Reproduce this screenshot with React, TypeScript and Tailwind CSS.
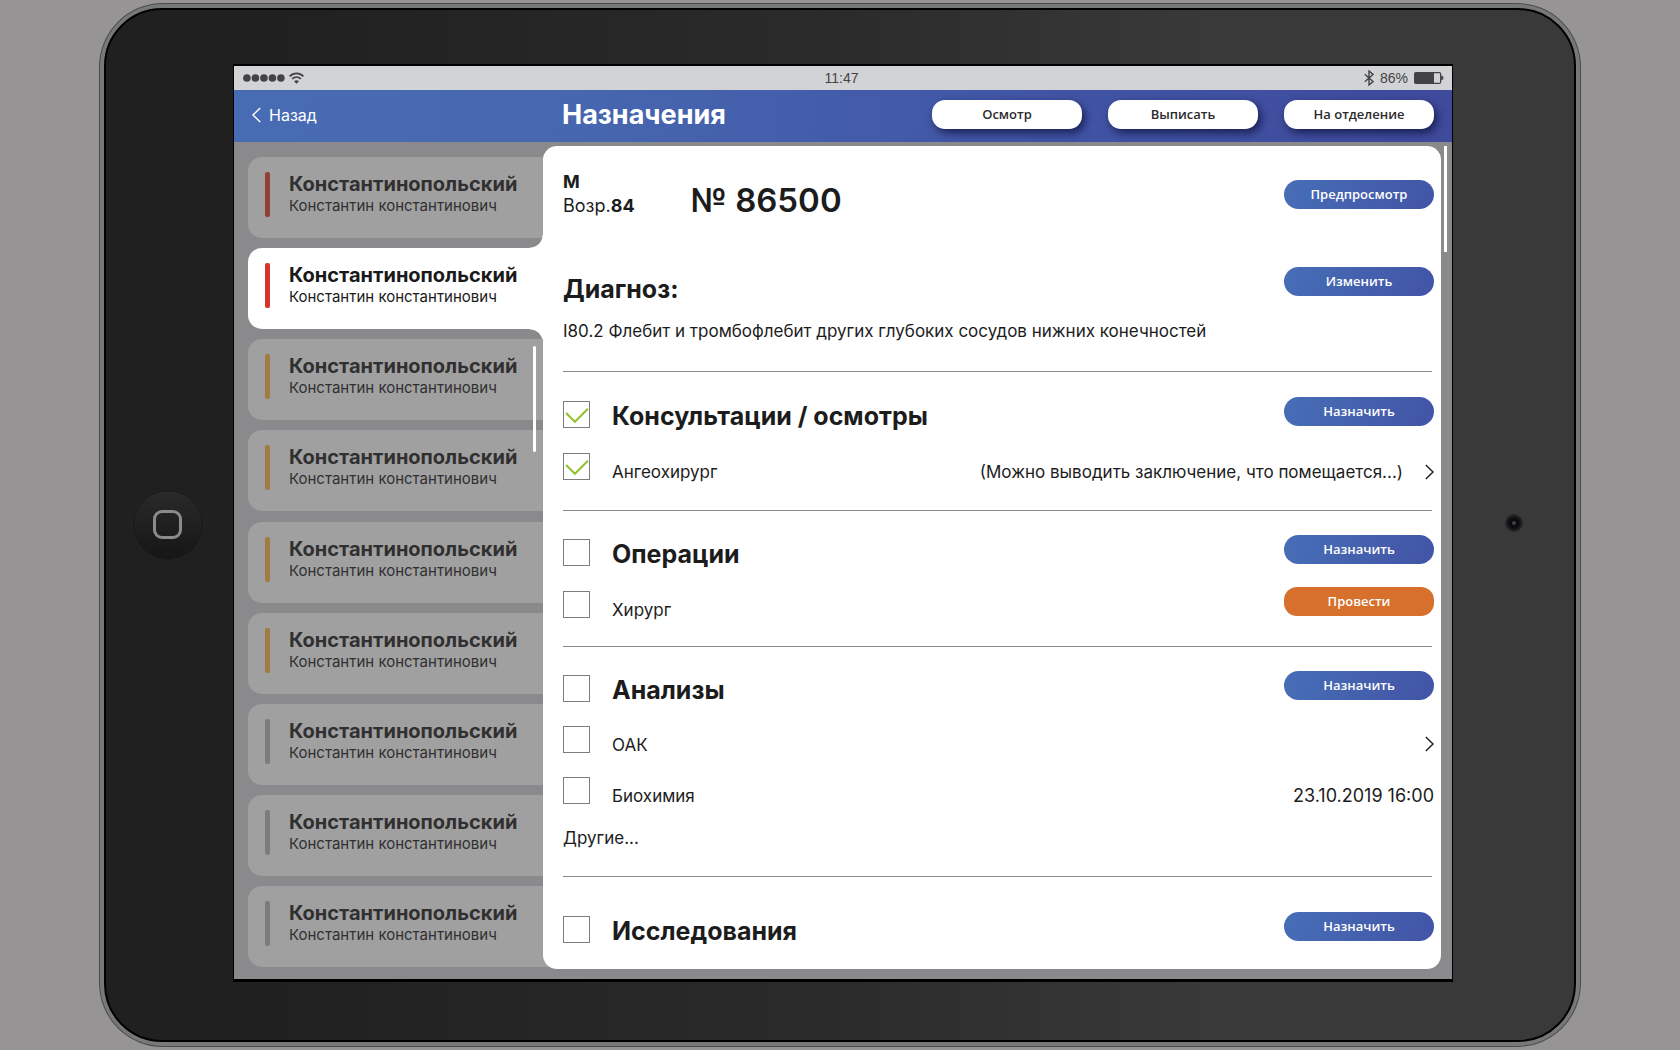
import React from 'react';
import clsx from 'clsx';

const patients = [
  { id: 1, bar: 'bg-[#914038]' },
  { id: 2, bar: 'bg-[#d6352a]', active: true },
  { id: 3, bar: 'bg-[#a17c42]' },
  { id: 4, bar: 'bg-[#a17c42]' },
  { id: 5, bar: 'bg-[#a17c42]' },
  { id: 6, bar: 'bg-[#a17c42]' },
  { id: 7, bar: 'bg-[#7c7c7e]' },
  { id: 8, bar: 'bg-[#7c7c7e]' },
  { id: 9, bar: 'bg-[#7c7c7e]' },
];

const Chevron = ({ className, left }: { className?: string; left?: boolean }) => (
  <svg viewBox="0 0 9 16" className={clsx('h-4 w-[9px] shrink-0', className)} fill="none" stroke="currentColor" strokeWidth="1.4">
    <path d={left ? 'M8.2 1 1 8l7.2 7' : 'M.8 1 8 8l-7.2 7'} />
  </svg>
);

const WhiteButton = ({ children }: { children: React.ReactNode }) => (
  <button className="h-[29px] w-[150px] rounded-[13px] bg-white pb-[2px] font-['Open_Sans',sans-serif] text-[13px] leading-4 font-semibold text-[#2b2b2d] shadow-[3px_4px_8px_rgba(12,16,60,0.75)]">
    {children}
  </button>
);

const PillButton = ({ children, orange }: { children: React.ReactNode; orange?: boolean }) => (
  <button
    className={clsx(
      "h-[29px] w-[150px] shrink-0 pb-[2px] font-['Open_Sans',sans-serif] text-[13px] leading-4 font-semibold text-white",
      orange ? 'rounded-[13px] bg-[#d6702c]' : 'rounded-full bg-linear-[110deg,#476eb6,#4254a6]'
    )}
  >
    {children}
  </button>
);

type RowProps = {
  label: string;
  heading?: boolean;
  checked?: boolean;
  children?: React.ReactNode;
};

const Row = ({ label, heading, checked, children }: RowProps) => (
  <div className="flex h-9 items-start justify-between">
    <label className="flex items-start gap-[22px]">
      <span className="relative mt-1 block size-[27px]">
        <input
          type="checkbox"
          defaultChecked={checked}
          className="peer block size-[27px] appearance-none border border-[#7d7d80] bg-white"
        />
        <svg
          viewBox="0 0 26 26"
          className="pointer-events-none absolute inset-0 hidden size-[27px] peer-checked:block"
          fill="none"
          stroke="#93c22f"
          strokeWidth="2"
        >
          <path d="M3 11.5 11.5 20 24 7.5" />
        </svg>
      </span>
      {heading ? (
        <h2 className="pt-[3px] text-[25px] leading-8 font-bold">{label}</h2>
      ) : (
        <span className="pt-[11px] text-[17px] leading-6">{label}</span>
      )}
    </label>
    {children}
  </div>
);

const Rule = () => <hr className="mr-[2px] border-t border-[#8a8a8c]" />;

const StatusBar = () => (
  <div className="grid h-6 grid-cols-3 items-center bg-[#d2d3d5] pr-2 pl-[9px] font-['Liberation_Sans',sans-serif] text-[14px] leading-4 text-[#434345]">
    <div className="flex items-center gap-1">
      <svg viewBox="0 0 42 8" className="h-2 w-[42px]" fill="#434345">
        <circle cx="3.9" cy="4" r="3.8" />
        <circle cx="12.4" cy="4" r="3.8" />
        <circle cx="20.9" cy="4" r="3.8" />
        <circle cx="29.4" cy="4" r="3.8" />
        <circle cx="37.9" cy="4" r="3.8" />
      </svg>
      <svg viewBox="0 0 14 11" className="h-3 w-[15px]" fill="none" stroke="#434345" strokeWidth="1.6">
        <path d="M.6 3.9C4.2.2 9.8.2 13.4 3.9" />
        <path d="M3 6.4c2.3-2.3 5.7-2.3 8 0" />
        <path d="M7 10.8 4.7 8.5c1.3-1.2 3.3-1.2 4.6 0z" fill="#434345" stroke="none" />
      </svg>
    </div>
    <span className="pr-1 text-center">11:47</span>
    <div className="flex items-center justify-end gap-[6px]">
      <svg viewBox="0 0 10 16" className="h-4 w-[10px]" fill="none" stroke="#434345" strokeWidth="1.4">
        <path d="M.8 4.3 9 11.6 5 15V1l4 3.4-8.2 7.3" />
      </svg>
      <span>86%</span>
      <svg viewBox="0 0 30 12" className="h-3 w-[30px]">
        <rect x=".6" y=".6" width="26" height="10.8" rx="1.2" fill="none" stroke="#434345" strokeWidth="1.2" />
        <rect x="1" y="1" width="19" height="10" fill="#434345" />
        <path d="M27.2 3.6c3 .4 3 4.4 0 4.8z" fill="#434345" />
      </svg>
    </div>
  </div>
);

const Header = () => (
  <header className="flex h-[52px] items-center bg-linear-[100deg,#486cb4_0%,#4768b1_25%,#4155a5_65%,#3f4a9c_100%] pr-[18px] pb-[3px] text-white">
    <div className="w-[328px] shrink-0 pl-[18px]">
      <a href="#back" className="flex items-center gap-2 text-[16px] leading-6">
        <Chevron left />
        Назад
      </a>
    </div>
    <h1 className="grow text-[27px] leading-8 font-bold">Назначения</h1>
    <div className="flex gap-[26px]">
      <WhiteButton>Осмотр</WhiteButton>
      <WhiteButton>Выписать</WhiteButton>
      <WhiteButton>На отделение</WhiteButton>
    </div>
  </header>
);

const Sidebar = () => (
  <nav className="relative flex w-[309px] shrink-0 flex-col justify-between pt-[15px] pb-3 pl-[14px]">
    {patients.map((patient) => (
      <button
        key={patient.id}
        className={clsx(
          'relative -mr-4 flex h-[81px] w-[311px] items-start gap-[19px] rounded-l-[14px] pt-[15px] pl-[17px] text-left',
          patient.active ? 'bg-white text-[#1a1a1a]' : 'bg-[#a0a0a0] text-[#303031]'
        )}
      >
        <span className={clsx('h-[45px] w-[5px] rounded-[2px]', patient.bar)} />
        <span className="block">
          <span className="block text-[20px] leading-6 font-bold">Константинопольский</span>
          <span className="block text-[15px] leading-5">Константин константинович</span>
        </span>
        {/* inverse corners where the open tab meets the panel */}
        {patient.active && (
          <>
            <span className="absolute right-4 bottom-full size-[13px] bg-[radial-gradient(circle_at_top_left,transparent_12px,white_13px)]" />
            <span className="absolute top-full right-4 size-[13px] bg-[radial-gradient(circle_at_bottom_left,transparent_12px,white_13px)]" />
          </>
        )}
      </button>
    ))}
    <span className="absolute top-[204px] right-[7px] h-[106px] w-[3px] rounded-full bg-white" />
  </nav>
);

const Panel = () => (
  <main className="relative mt-1 mr-[11px] mb-[10px] min-w-0 grow rounded-[14px] bg-white pr-[7px] pl-5 text-[18px] text-[#1c1c1d]">
    <section className="flex h-[121px] items-start justify-between pt-[34px]">
      <div className="flex gap-[56px]">
        <div className="-mt-[10px] leading-6">
          <div className="font-bold">М</div>
          <div>
            Возр.<b>84</b>
          </div>
        </div>
        <div className="text-[33px] leading-10 font-semibold">№ 86500</div>
      </div>
      <PillButton>Предпросмотр</PillButton>
    </section>
    <section className="flex h-[104px] items-start justify-between">
      <div>
        <h2 className="pt-[6px] text-[25px] leading-8 font-bold">Диагноз:</h2>
        <p className="pt-[14px] text-[17px] leading-6">
          I80.2 Флебит и тромбофлебит других глубоких сосудов нижних конечностей
        </p>
      </div>
      <PillButton>Изменить</PillButton>
    </section>
    <Rule />
    <section className="flex flex-col gap-4 py-[25px]">
      <Row label="Консультации / осмотры" heading checked>
        <PillButton>Назначить</PillButton>
      </Row>
      <Row label="Ангеохирург" checked>
        <a href="#conclusion" className="flex items-center gap-[22px] pt-[11px] text-[17px] leading-6">
          (Можно выводить заключение, что помещается...)
          <Chevron />
        </a>
      </Row>
    </section>
    <Rule />
    <section className="flex flex-col gap-4 pt-6 pb-[23px]">
      <Row label="Операции" heading>
        <PillButton>Назначить</PillButton>
      </Row>
      <Row label="Хирург">
        <PillButton orange>Провести</PillButton>
      </Row>
    </section>
    <Rule />
    <section className="flex flex-col gap-[15px] pt-6 pb-[26px]">
      <Row label="Анализы" heading>
        <PillButton>Назначить</PillButton>
      </Row>
      <Row label="ОАК">
        <a href="#oak" aria-label="ОАК" className="flex h-9 items-end pb-[6px]">
          <Chevron />
        </a>
      </Row>
      <Row label="Биохимия">
        <time className="pt-[11px] leading-6">23.10.2019 16:00</time>
      </Row>
      <a href="#other" className="pt-[2px] text-[17px] leading-6">
        Другие...
      </a>
    </section>
    <Rule />
    <section className="pt-[35px] pb-[21px]">
      <Row label="Исследования" heading>
        <PillButton>Назначить</PillButton>
      </Row>
    </section>
  </main>
);

const App = () => {
  return (
    <div className="min-h-screen bg-[#979496] px-[99px] py-[3px] font-[Inter,sans-serif]">
      <div className="rounded-[64px] bg-[#4c4c4e] p-px">
        <div className="rounded-[63px] bg-[#77787a] p-1">
          <div className="flex items-center rounded-[58px] border-2 border-black bg-linear-to-r from-[#202020] from-10% via-[#2b2b2b] via-50% to-[#393939] to-75% pt-[54px] pb-[58px]">
            <div className="flex w-[127px] shrink-0 justify-center pt-[3px] pr-1">
              <div className="flex size-[70px] items-center justify-center rounded-full border border-[#191919] bg-linear-to-b from-[#2a2a2a] to-[#161616] shadow-[0_0_3px_#2a2a2a]">
                <div className="size-[29px] rounded-[9px] border-3 border-[#8b8b8b]" />
              </div>
            </div>

            {/* Screen */}
            <div className="min-w-0 grow border-x border-t-2 border-b-3 border-black bg-[#8a8a8c]">
              <StatusBar />
              <Header />
              <div className="relative flex">
                <Sidebar />
                <Panel />
                <span className="absolute top-1 right-[5px] h-[106px] w-[3px] bg-white" />
              </div>
            </div>

            <div className="flex w-[121px] shrink-0 justify-center">
              <div className="flex size-[18px] items-center justify-center rounded-full bg-[radial-gradient(circle,#0b0b0d_35%,#2a2a2a_70%)]">
                <div className="size-1 rounded-full bg-[#3d4150]" />
              </div>
            </div>
          </div>
        </div>
      </div>
    </div>
  );
};

export default App;
